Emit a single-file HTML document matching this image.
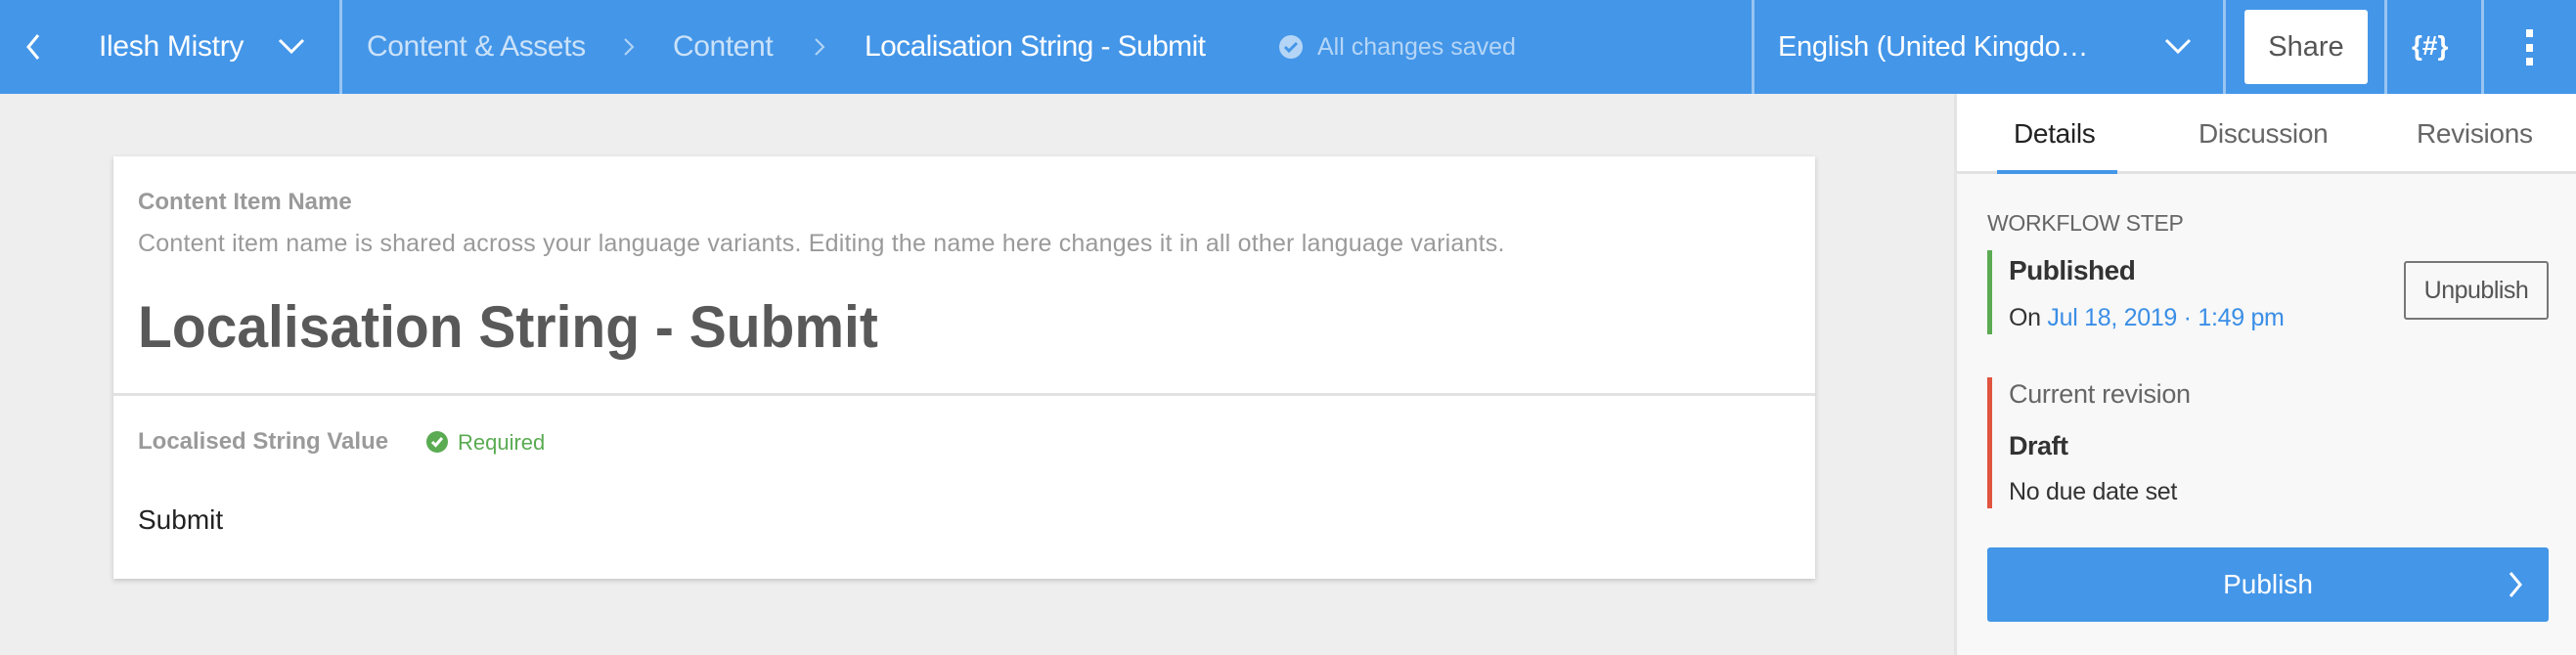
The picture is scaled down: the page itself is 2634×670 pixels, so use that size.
<!DOCTYPE html>
<html><head><meta charset="utf-8"><style>
*{margin:0;padding:0;box-sizing:border-box}
body{width:2634px;height:670px;overflow:hidden;background:#eeeeee;font-family:"Liberation Sans",sans-serif;position:relative}
.a{position:absolute;white-space:nowrap}
.hdr{position:absolute;left:0;top:0;width:2634px;height:96px;background:#4496e8}
.div{position:absolute;top:0;width:3px;height:96px;background:rgba(255,255,255,.45)}
.t{position:absolute;white-space:nowrap;line-height:40px;height:40px}
</style></head><body>
<div class="hdr">
 <svg class="a" style="left:26px;top:34px" width="16" height="28" viewBox="0 0 16 28"><path d="M13 2 L3 14 L13 26" stroke="#fff" stroke-width="3" fill="none"/></svg>
 <div class="t" style="left:101px;top:28px;font-size:30px;color:#fff;letter-spacing:-0.3px">Ilesh Mistry</div>
 <svg class="a" style="left:284px;top:38px" width="28" height="18" viewBox="0 0 28 18"><path d="M2 3 L14 15 L26 3" stroke="#fff" stroke-width="3" fill="none"/></svg>
 <div class="div" style="left:347px"></div>
 <div class="t" style="left:375px;top:28px;font-size:30px;color:rgba(255,255,255,.72);letter-spacing:-0.4px">Content &amp; Assets</div>
 <svg class="a" style="left:637px;top:38px" width="12" height="20" viewBox="0 0 12 20"><path d="M2 2 L10 10 L2 18" stroke="rgba(255,255,255,.6)" stroke-width="2" fill="none"/></svg>
 <div class="t" style="left:688px;top:28px;font-size:30px;color:rgba(255,255,255,.72);letter-spacing:-0.4px">Content</div>
 <svg class="a" style="left:832px;top:38px" width="12" height="20" viewBox="0 0 12 20"><path d="M2 2 L10 10 L2 18" stroke="rgba(255,255,255,.6)" stroke-width="2" fill="none"/></svg>
 <div class="t" style="left:884px;top:28px;font-size:30px;color:#fff;letter-spacing:-0.6px">Localisation String - Submit</div>
 <svg class="a" style="left:1307px;top:35px" width="26" height="26" viewBox="0 0 26 26"><circle cx="13" cy="13" r="12" fill="rgba(255,255,255,.6)"/><path d="M7 13 L11 17 L19 9" stroke="#4496e8" stroke-width="3" fill="none"/></svg>
 <div class="t" style="left:1347px;top:28px;font-size:25px;color:rgba(255,255,255,.6)">All changes saved</div>
 <div class="div" style="left:1791px"></div>
 <div class="t" style="left:1818px;top:28px;font-size:29px;color:#fff;letter-spacing:-0.3px">English (United Kingdo…</div>
 <svg class="a" style="left:2213px;top:38px" width="28" height="18" viewBox="0 0 28 18"><path d="M2 3 L14 15 L26 3" stroke="#fff" stroke-width="3" fill="none"/></svg>
 <div class="div" style="left:2273px"></div>
 <div class="a" style="left:2295px;top:10px;width:126px;height:76px;background:#fff;border-radius:3px;font-size:29px;color:#555;line-height:76px;text-align:center">Share</div>
 <div class="div" style="left:2438px"></div>
 <div class="t" style="left:2466px;top:27px;font-size:28px;color:#fff;font-weight:bold">{#}</div>
 <div class="div" style="left:2537px"></div>
 <div class="a" style="left:2583px;top:30px;width:7px;height:8px;background:#fff"></div>
 <div class="a" style="left:2583px;top:45px;width:7px;height:8px;background:#fff"></div>
 <div class="a" style="left:2583px;top:59px;width:7px;height:8px;background:#fff"></div>
</div>

<!-- card -->
<div class="a" style="left:116px;top:160px;width:1740px;height:432px;background:#fff;box-shadow:0 2px 5px rgba(0,0,0,.18)"></div>
<div class="a" style="left:116px;top:402px;width:1740px;height:3px;background:#e2e2e2"></div>
<div class="t" style="left:141px;top:187px;font-size:24px;font-weight:bold;color:#9a9a9a;letter-spacing:0px">Content Item Name</div>
<div class="t" style="left:141px;top:229px;font-size:25px;color:#9a9a9a;letter-spacing:0.2px">Content item name is shared across your language variants. Editing the name here changes it in all other language variants.</div>
<div class="a" style="left:141px;top:300px;font-size:60px;line-height:70px;font-weight:bold;color:#595959;transform:scaleX(0.95);transform-origin:left center">Localisation String - Submit</div>
<div class="t" style="left:141px;top:432px;font-size:24px;font-weight:bold;color:#9a9a9a;letter-spacing:0px">Localised String Value</div>
<svg class="a" style="left:434px;top:439px" width="26" height="26" viewBox="0 0 26 26"><circle cx="13" cy="13" r="11" fill="#5aab52"/><path d="M8 13 L11.5 16.5 L18 9" stroke="#fff" stroke-width="3" fill="none"/></svg>
<div class="t" style="left:468px;top:433px;font-size:22px;color:#5aab52">Required</div>
<div class="t" style="left:141px;top:512px;font-size:28px;color:#222">Submit</div>

<!-- sidebar -->
<div class="a" style="left:1998px;top:96px;width:636px;height:574px;background:#f8f8f8;border-left:3px solid #e4e4e4"></div>
<div class="a" style="left:2001px;top:96px;width:633px;height:82px;background:#fff;border-bottom:3px solid #e2e2e2"></div>
<div class="a" style="left:2042px;top:174px;width:123px;height:4px;background:#4496e8"></div>
<div class="t" style="left:2059px;top:117px;font-size:28px;color:#222;letter-spacing:-0.3px">Details</div>
<div class="t" style="left:2248px;top:117px;font-size:28px;color:#666;letter-spacing:-0.3px">Discussion</div>
<div class="t" style="left:2471px;top:117px;font-size:28px;color:#666;letter-spacing:-0.3px">Revisions</div>

<div class="t" style="left:2032px;top:208px;font-size:23px;color:#666;letter-spacing:-0.3px">WORKFLOW STEP</div>
<div class="a" style="left:2032px;top:256px;width:5px;height:86px;background:#5aab52"></div>
<div class="t" style="left:2054px;top:257px;font-size:28px;font-weight:bold;color:#333;letter-spacing:-0.5px">Published</div>
<div class="t" style="left:2054px;top:305px;font-size:25px;color:#333;letter-spacing:-0.3px">On <span style="color:#3a8ee6">Jul 18, 2019 · 1:49 pm</span></div>
<div class="a" style="left:2458px;top:267px;width:148px;height:60px;border:2px solid #777;border-radius:3px;font-size:25px;line-height:56px;text-align:center;color:#555;letter-spacing:-0.5px">Unpublish</div>

<div class="a" style="left:2032px;top:386px;width:5px;height:134px;background:#e05440"></div>
<div class="t" style="left:2054px;top:383px;font-size:27px;color:#666;letter-spacing:-0.3px">Current revision</div>
<div class="t" style="left:2054px;top:436px;font-size:27px;font-weight:bold;color:#333;letter-spacing:-0.5px">Draft</div>
<div class="t" style="left:2054px;top:483px;font-size:25px;color:#333;letter-spacing:-0.3px">No due date set</div>

<div class="a" style="left:2032px;top:560px;width:574px;height:76px;background:#4496e8;border-radius:3px;font-size:28px;color:#fff;text-align:center;line-height:76px">Publish</div>
<svg class="a" style="left:2564px;top:584px" width="16" height="28" viewBox="0 0 16 28"><path d="M3 2 L13 14 L3 26" stroke="#fff" stroke-width="3" fill="none"/></svg>
</body></html>
